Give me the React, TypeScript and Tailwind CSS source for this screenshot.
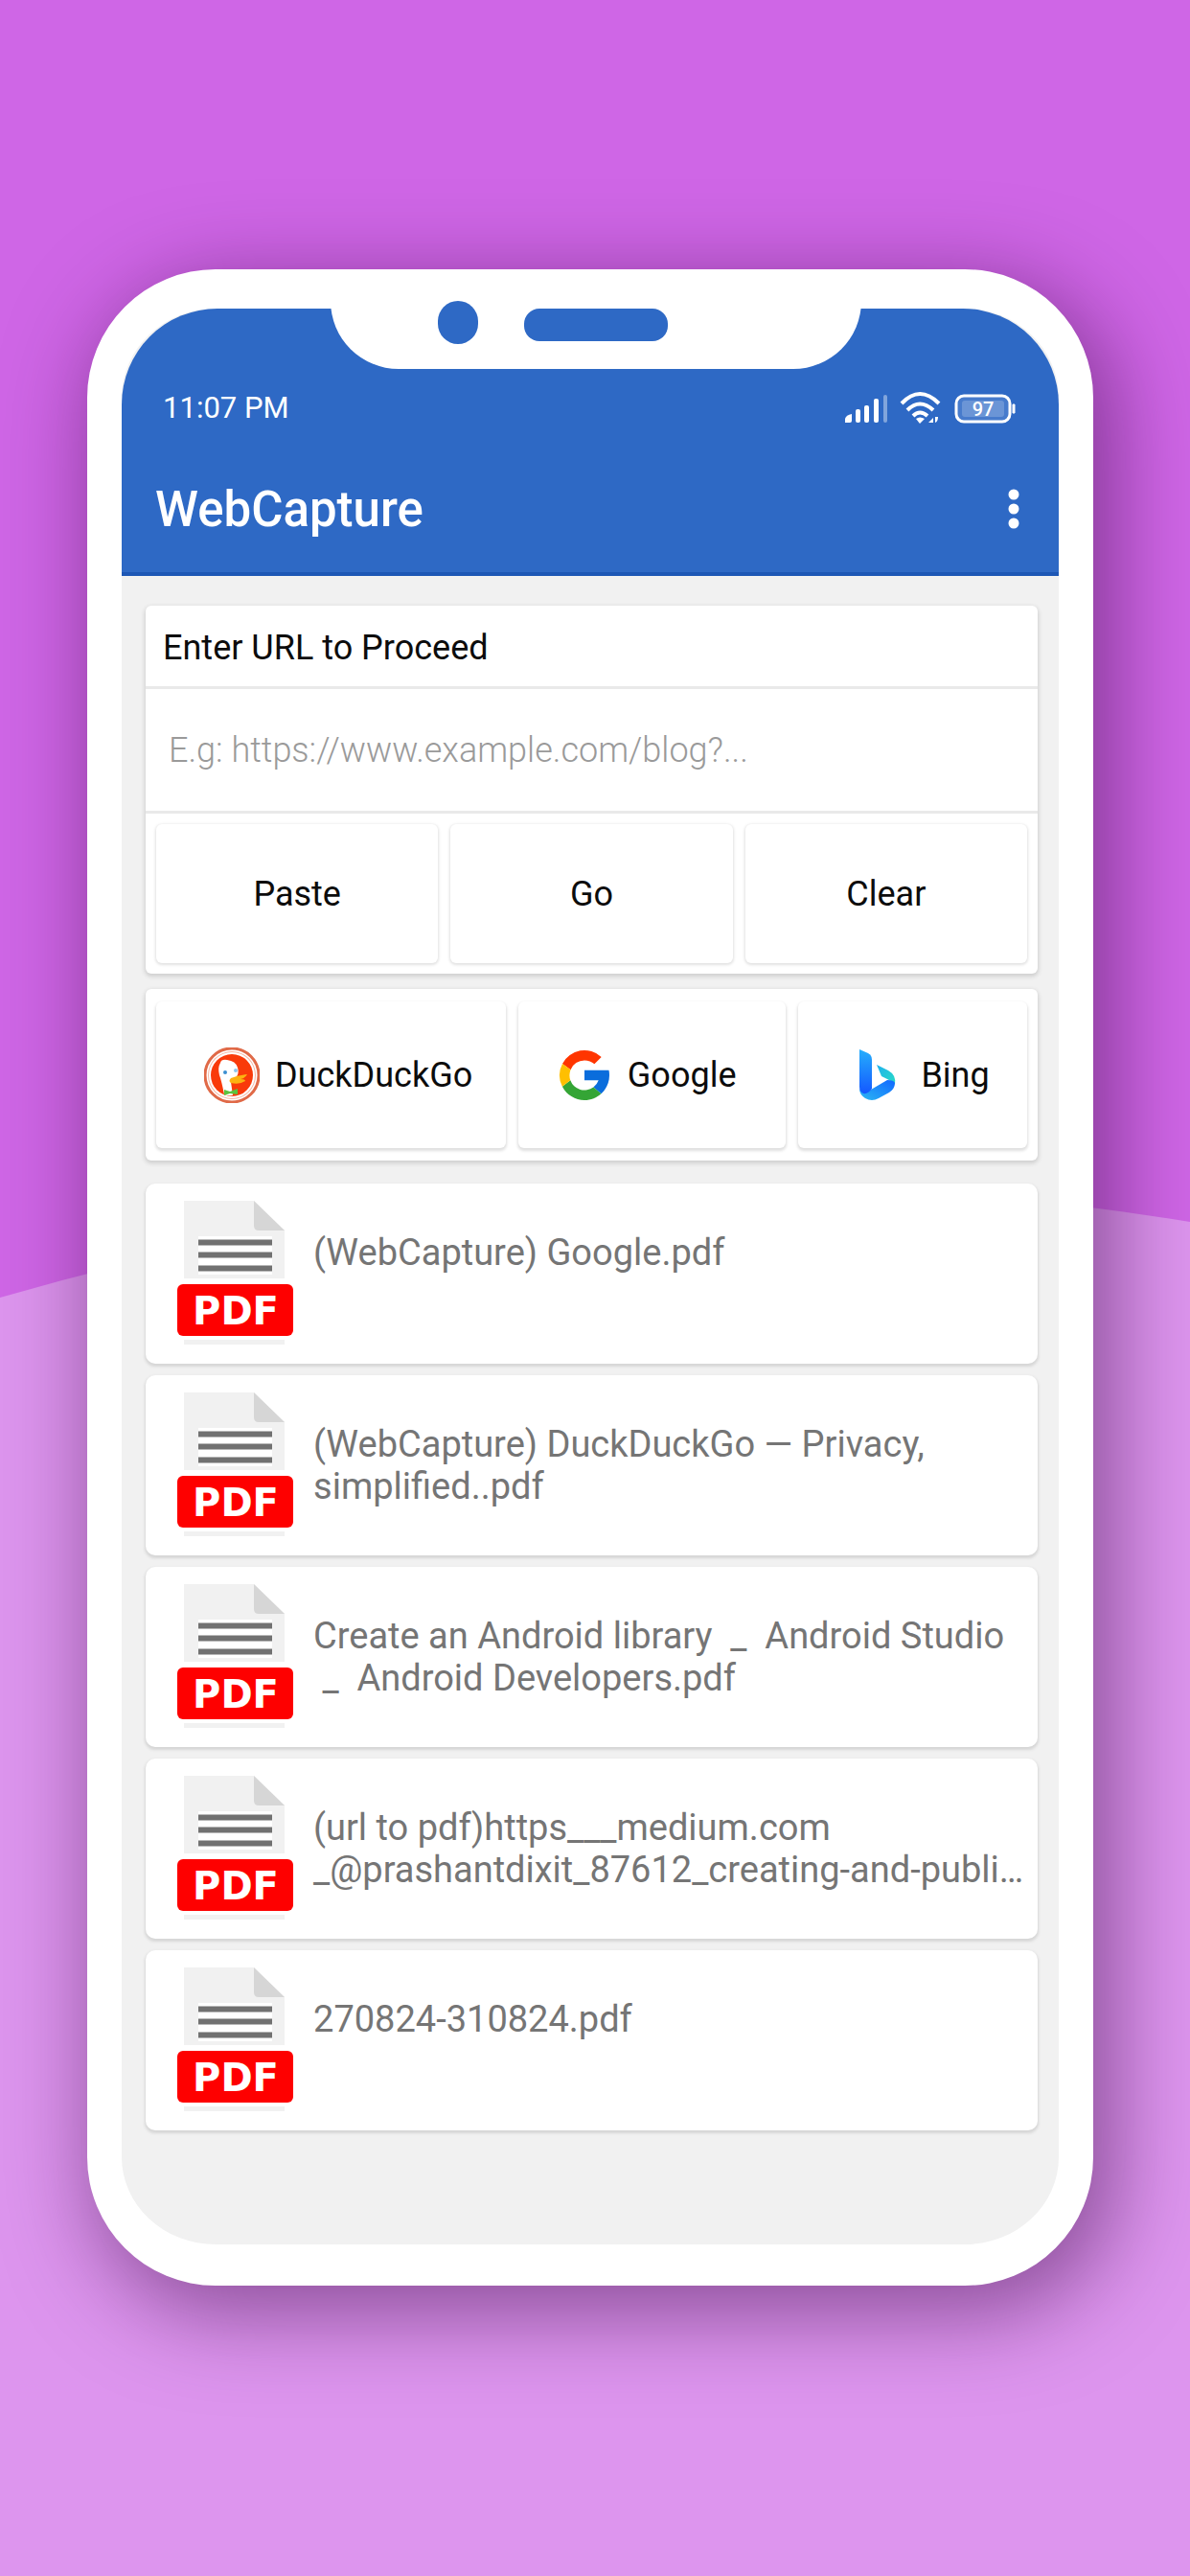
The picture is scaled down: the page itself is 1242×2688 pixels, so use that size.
import type { ReactNode } from "react";

const files = [
  "(WebCapture) Google.pdf",
  "(WebCapture) DuckDuckGo — Privacy, simplified..pdf",
  "Create an Android library  _  Android Studio\n _  Android Developers.pdf",
  "(url to pdf)https___medium.com\n_@prashantdixit_87612_creating-and-publi…",
  "270824-310824.pdf",
];

function Backdrop() {
  return (
    <svg aria-hidden="true" className="absolute inset-0 h-full w-full" viewBox="0 0 1242 2688" preserveAspectRatio="none">
      <path d="M0 1354Q621 1173 1242 1275V2688H0Z" fill="#dd95ee" />
    </svg>
  );
}

function SignalIcon() {
  return (
    <svg aria-hidden="true" width="46" height="34" viewBox="0 0 46 34" fill="#fff">
      <path d="M1 32v-4q1-4 7-5v7q0 2-2 2Z" />
      <rect x="12" y="18" width="5" height="14" rx="2" />
      <rect x="21" y="14" width="5" height="18" rx="2" />
      <rect x="31" y="7" width="5" height="25" rx="2" />
      <rect x="41" y="3" width="4" height="29" rx="2" opacity=".4" />
    </svg>
  );
}

function WifiIcon() {
  return (
    <svg aria-hidden="true" width="44" height="36" viewBox="0 0 44 36" fill="none" stroke="#fff" strokeWidth="4">
      <path d="M2 13Q21-7 41 13M8 20Q21 7 35 20M14 26Q21 19 29 26" />
      <path d="M17 29q4-3 9 0l-5 5Z" fill="#fff" stroke="none" />
      <path d="M30 33l5-5v5ZM37 33v-6h3q0 5-3 6Z" fill="#fff" stroke="none" />
    </svg>
  );
}

function BatteryIcon() {
  return (
    <svg aria-hidden="true" width="66" height="34" viewBox="0 0 66 34">
      <rect x="3" y="4" width="56" height="27" rx="8" fill="#fff" fillOpacity=".12" stroke="#fff" strokeWidth="3" />
      <rect x="9" y="9" width="44" height="17" rx="3" fill="#fff" fillOpacity=".2" />
      <path d="M62 13h2v9h-2z" fill="#fff" stroke="#fff" />
      <text x="31" y="25" textAnchor="middle" fill="#fff" fontSize="20" fontFamily="Roboto, sans-serif" fontWeight="500">97</text>
    </svg>
  );
}

function DuckIcon() {
  return (
    <svg aria-hidden="true" width="58" height="58" viewBox="0 0 58 58">
      <circle cx="29" cy="29" r="28" fill="#fff" stroke="#e06a48" strokeWidth="3" />
      <circle cx="29" cy="29" r="25" fill="#f6b7a2" />
      <circle cx="29" cy="29" r="24" fill="#fff" />
      <circle cx="29" cy="29" r="22" fill="#f93a0a" />
      <path d="M17 16q1-4 7-3 9 1 11 8 2 6-2 11l-5 4 2 14q-5 1-9-1-3-15-5-20-2-8 1-13Z" fill="#fff" />
      <circle cx="22" cy="26" r="2" fill="#3b8fd0" />
      <circle cx="33" cy="24" r="2" fill="#8ec7ee" />
      <path d="M28 32q7-3 17-4-2 4-7 5 5 0 5 2-6 4-15 2-3-2 0-5Z" fill="#fcb211" />
      <path d="M21 44l6 2 8-3v6l-8-1-6 2Z" fill="#5cc33f" />
    </svg>
  );
}

function GoogleIcon() {
  return (
    <svg aria-hidden="true" width="58" height="58" viewBox="0 0 58 58">
      <g transform="translate(3 3) scale(1.3) translate(-4 -4)">
        <path fill="#0a6ddc" d="M43.6 20H24v8h11.3a12 12 0 0 1-4.1 5.6l6.2 5.2C37 39.2 44 34 44 24c0-1.3-.1-2.7-.4-4Z" />
        <path fill="#ff3500" d="m6.3 14.7 6.6 4.800A12 12 0 0 1 24 12c3.1 0 5.8 1.2 8 3l5.6-5.7A20 20 0 0 0 6.3 14.7Z" />
        <path fill="#34a535" d="M24 44c5.2 0 9.9-2 13.4-5.2l-6.2-5.2A12 12 0 0 1 12.7 28l-6.5 5A20 20 0 0 0 24 44Z" />
        <path fill="#ffbf00" d="M6.3 14.7A20 20 0 0 0 6.2 33l6.5-5a12 12 0 0 1 .2-8.500Z" />
      </g>
    </svg>
  );
}

function BingIcon() {
  return (
    <svg aria-hidden="true" width="58" height="58" viewBox="0 0 58 58">
      <defs>
        <linearGradient id="stem" x1="0" y1="0" x2="0" y2="1">
          <stop offset="0" stopColor="#25aefc" />
          <stop offset="1" stopColor="#1458ff" />
        </linearGradient>
        <linearGradient id="bowl" x1="0" y1="1" x2="1" y2="0">
          <stop offset="0" stopColor="#2bb8f3" />
          <stop offset="1" stopColor="#1267ff" />
        </linearGradient>
        <linearGradient id="wing" x1="0" y1="0" x2="1" y2="1">
          <stop offset="0" stopColor="#1fb0ee" />
          <stop offset="1" stopColor="#27dcc5" />
        </linearGradient>
      </defs>
      <path d="M28 18l12 6q9 5 7 15-3-4-8-6l-6-3Z" fill="url(#wing)" />
      <path d="M10 43q4 5 12 1l17-10q7 0 8 3 0 6-6 10l-11 6q-7 4-14 0-6-4-6-10Z" fill="url(#bowl)" />
      <path d="M10 2l9 4q4 2 4 7v30q-4 6-9 5-4-2-4-7Z" fill="url(#stem)" />
    </svg>
  );
}

function PdfIcon() {
  return (
    <svg aria-hidden="true" className="shrink-0" width="122" height="152" viewBox="0 0 122 152">
      <path d="M7 0h73l32 31v50H7Z" fill="#f1f1f1" />
      <path d="M80 0l32 31H85q-5 0-5-5Z" fill="#d6d6d6" />
      <path d="M22 37h77v40H22Z" fill="#fff" />
      <path d="M22 43.5h77M22 56.5h77M22 70.5h77" stroke="#717171" strokeWidth="6" />
      <path d="M7 145h105v5H7Z" fill="#f1f1f1" />
      <rect y="87" width="121" height="54" rx="6" fill="#fe0000" />
      <text x="61" y="129" textAnchor="middle" fill="#fff" fontSize="40" fontWeight="700" fontFamily="'DejaVu Sans', sans-serif">PDF</text>
    </svg>
  );
}

function ActionButton({ children }: { children: ReactNode }) {
  return (
    <button type="button" className="h-[145px] rounded-md bg-white text-center shadow-[0_1px_3px_1px_#e2e2e2]">
      {children}
    </button>
  );
}

function EngineButton({ icon, label, className }: { icon: ReactNode; label: string; className: string }) {
  return (
    <button type="button" className={`flex h-[153px] items-center gap-4 rounded-md bg-white shadow-[0_2px_3px_1px_#e0e0e0] ${className}`}>
      {icon}
      {label}
    </button>
  );
}

export default function App() {
  return (
    <div className="relative min-h-screen bg-[#cf66e6] px-[7.33%] pt-[281px] pb-[302px] font-['Roboto',sans-serif] text-[36px] leading-[44px] text-[#0c0c0c]">
      <Backdrop />
      <main className="relative mr-[10px] rounded-[134px] border-x-[36px] border-t-[41px] border-b-[43px] border-white bg-[#f1f1f1] shadow-[14px_22px_90px_8px_rgba(60,10,70,0.5)]">
        <div className="absolute inset-x-0 top-0 flex justify-center pl-3">
          <div aria-hidden="true" className="-mt-2 flex h-[71px] w-[554px] items-start gap-12 rounded-b-[74px] bg-white pl-[112px]">
            <div className="h-[45px] w-[42px] rounded-full bg-[#2e69c5]" />
            <div className="mt-2 h-[34px] w-[150px] rounded-2xl bg-[#2e69c5]" />
          </div>
        </div>

        <header className="rounded-t-[100px] border-b-4 border-[#1d57b5] bg-[#2e69c5] text-white">
          <div className="flex items-center justify-between pt-[82px] pr-[44px] pl-[43px]">
            <time className="text-[31px]">11:07 PM</time>
            <div className="flex items-center gap-3">
              <SignalIcon />
              <WifiIcon />
              <BatteryIcon />
            </div>
          </div>
          <div className="flex items-center justify-between pt-[55px] pr-[25px] pb-[36px] pl-[35px]">
            <h1 className="text-[51px] leading-[58px] font-medium">WebCapture</h1>
            <button type="button" aria-label="More options" className="px-4">
              <svg aria-hidden="true" width="12" height="44" viewBox="0 0 12 44" fill="#fff">
                <circle cx="6" cy="6" r="5.500" />
                <circle cx="6" cy="21" r="5.500" />
                <circle cx="6" cy="36" r="5.500" />
              </svg>
            </button>
          </div>
        </header>

        <div className="pt-[31px] pr-[22px] pb-[119px] pl-[25px]">
          <section className="rounded-md bg-white shadow-[0_2px_4px_1px_#cfcfcf]">
            <label htmlFor="url" className="block px-[18px] pt-[22px] pb-[18px]">
              Enter URL to Proceed
            </label>
            <input
              id="url"
              type="url"
              placeholder="E.g: https://www.example.com/blog?..."
              className="block h-[133px] w-full border-y-3 border-[#e9e9e9] px-6 font-light outline-none placeholder:text-[#9a9a9a]"
            />
            <div className="grid grid-cols-3 gap-[13px] p-[11px]">
              <ActionButton>Paste</ActionButton>
              <ActionButton>Go</ActionButton>
              <ActionButton>Clear</ActionButton>
            </div>
          </section>

          <section aria-label="Search engines" className="mt-4 grid grid-cols-[364fr_279fr_238fr] gap-[13px] rounded-md bg-white px-[11px] py-[13px] shadow-[0_2px_4px_1px_#cfcfcf]">
            <EngineButton icon={<DuckIcon />} label="DuckDuckGo" className="pl-[50px]" />
            <EngineButton icon={<GoogleIcon />} label="Google" className="pl-10" />
            <EngineButton icon={<BingIcon />} label="Bing" className="pl-[54px]" />
          </section>

          <ul className="mt-6 flex flex-col gap-3 text-[38px] text-[#757575]">
            {files.map((name) => (
              <li key={name} className="flex h-[188px] gap-5 rounded-[10px] bg-white pt-[18px] pr-2 pl-[33px] shadow-[0_2px_3px_1px_#d6d6d6]">
                <PdfIcon />
                <p className="mt-8 min-w-0 flex-1 whitespace-pre-wrap">{name}</p>
              </li>
            ))}
          </ul>
        </div>
      </main>
    </div>
  );
}
